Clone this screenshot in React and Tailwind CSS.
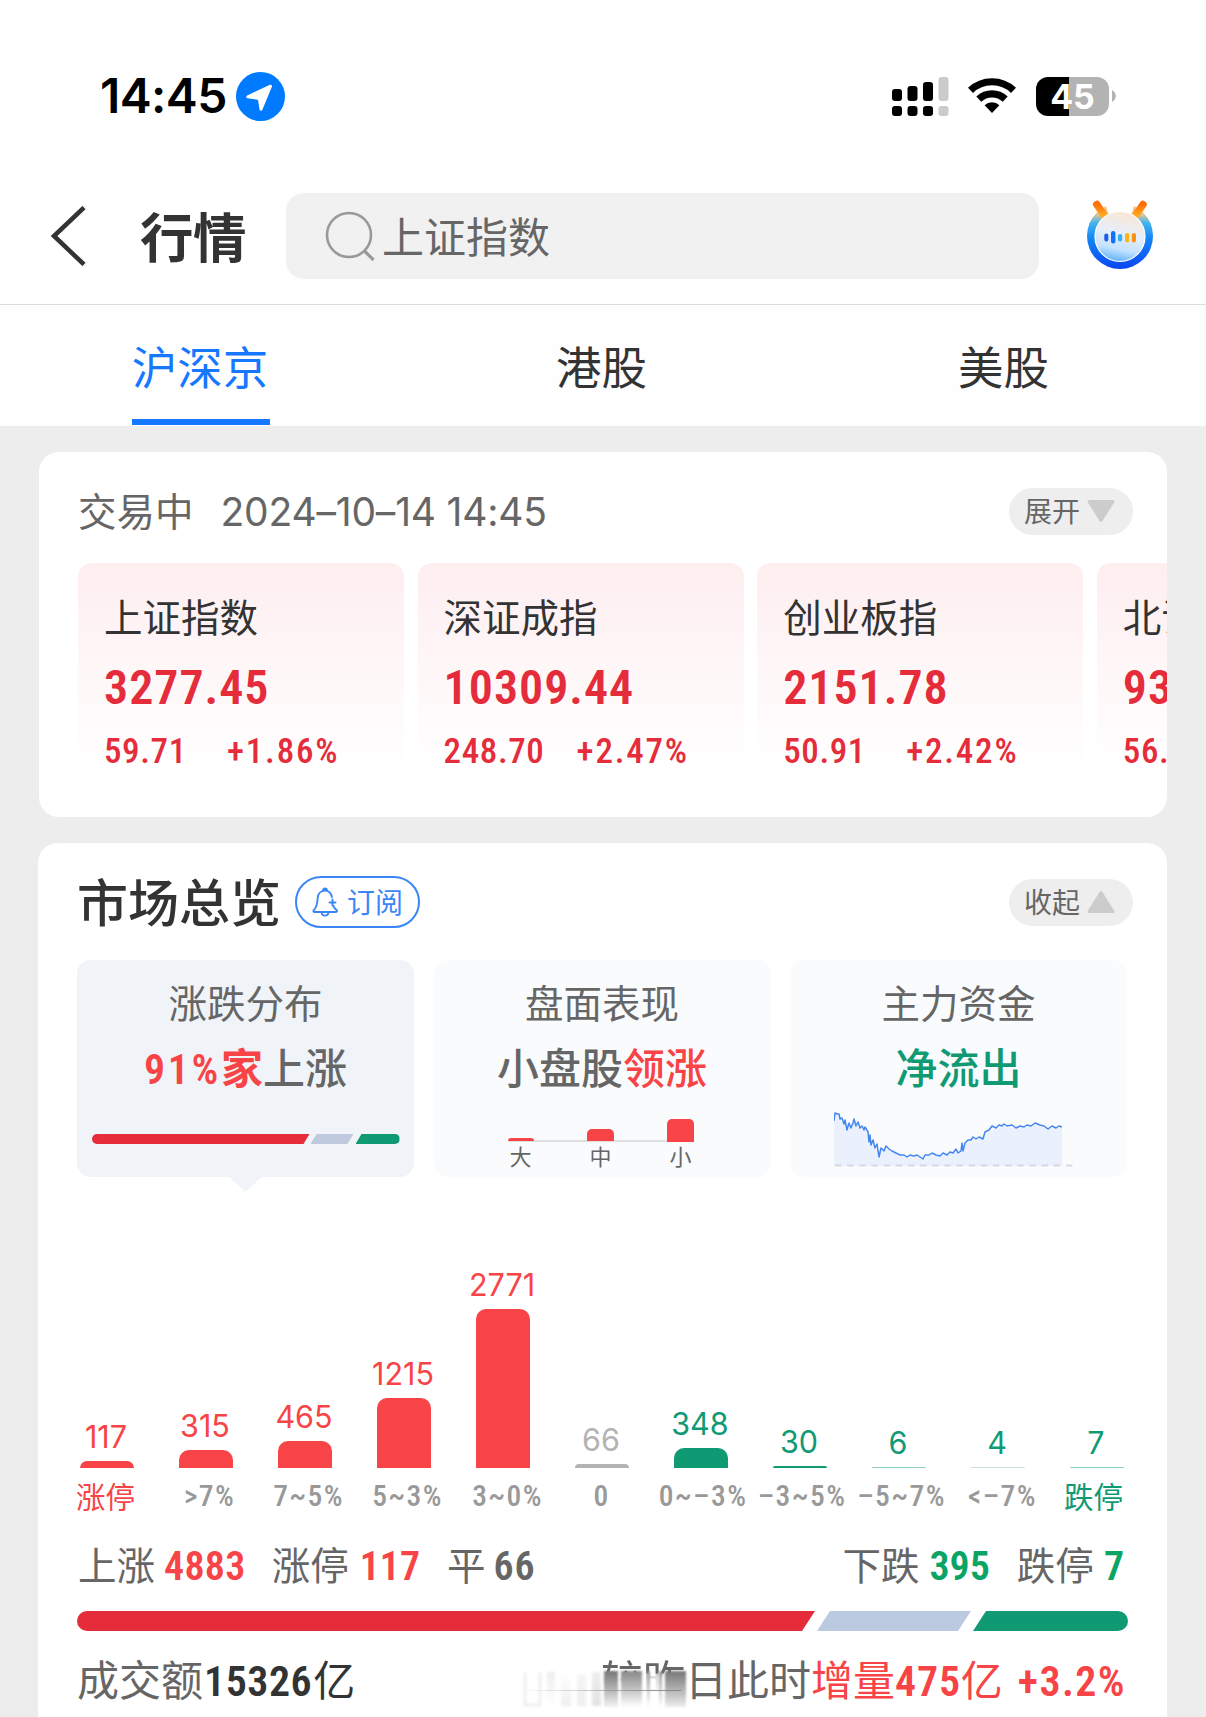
import React from "react";

const indexes = [
  { name: "上证指数", value: "3277.45", diff: "59.71", rate: "+1.86%", diffWidth: "w-[123px]" },
  { name: "深证成指", value: "10309.44", diff: "248.70", rate: "+2.47%", diffWidth: "w-[133px]" },
  { name: "创业板指", value: "2151.78", diff: "50.91", rate: "+2.42%", diffWidth: "w-[123px]" },
  { name: "北证50", value: "934.12", diff: "56.30", rate: "+6.41%", diffWidth: "w-[123px]" },
];

const rangeLabel = "text-[#999] font-medium tracking-[1.4px]";

const distribution = [
  { count: 117, height: 7, label: "涨停", bar: "bg-[#f84446]", text: "text-[#f84446]", labelClass: "text-[#f84446] pr-[2px] pt-[3px]" },
  { count: 315, height: 18, label: ">7%", bar: "bg-[#f84446]", text: "text-[#f84446]", labelClass: `${rangeLabel} pl-[8px]` },
  { count: 465, height: 27, label: "7~5%", bar: "bg-[#f84446]", text: "text-[#f84446]", labelClass: `${rangeLabel} pl-[8px]` },
  { count: 1215, height: 70, label: "5~3%", bar: "bg-[#f84446]", text: "text-[#f84446]", labelClass: `${rangeLabel} pl-[8px]` },
  { count: 2771, height: 159, label: "3~0%", bar: "bg-[#f84446]", text: "text-[#f84446]", labelClass: `${rangeLabel} pl-[10px]` },
  { count: 66, height: 4, label: "0", bar: "bg-[#b3b3b3]", text: "text-[#b3b3b3]", labelClass: rangeLabel },
  { count: 348, height: 20, label: "0~–3%", bar: "bg-[#109a74]", text: "text-[#109a74]", labelClass: `${rangeLabel} pl-[5px]` },
  { count: 30, height: 2, label: "–3~5%", bar: "bg-[#109a74]", text: "text-[#109a74]", labelClass: `${rangeLabel} pl-[5px]` },
  { count: 6, height: 1, label: "–5~7%", bar: "bg-[#8fd0bd]", text: "text-[#109a74]", labelClass: `${rangeLabel} pl-[6px]` },
  { count: 4, height: 1, label: "<–7%", bar: "bg-[#c0e4da]", text: "text-[#109a74]", labelClass: `${rangeLabel} pl-[10px]` },
  { count: 7, height: 1, label: "跌停", bar: "bg-[#8fd0bd]", text: "text-[#109a74]", labelClass: "text-[#109a74] pr-[6px] pt-[3px]" },
];

const StatusBar = () => (
  <div className="flex h-[192px] items-center justify-between pl-[100px] pr-[90px]">
    <div className="flex items-center">
      <span className="w-[136px] font-['Inter',sans-serif] text-[48px] font-semibold leading-none tracking-[-0.6px] text-black">
        14:45
      </span>
      <svg className="h-[49px] w-[49px]" viewBox="0 0 49 49">
        <circle cx="24.5" cy="24.5" r="24.5" fill="#007aff" />
        <path
          d="M34.5 14.2 L25 37.2 L23.3 26.4 L11.8 24.8 Z"
          fill="#fff"
          stroke="#fff"
          strokeWidth="3"
          strokeLinejoin="round"
        />
      </svg>
    </div>
    <div className="flex items-center">
      <svg className="h-[39px] w-[57px]" viewBox="0 0 57 39">
        <rect x="0" y="12" width="10" height="12" rx="3" />
        <rect x="15.5" y="9" width="10" height="15" rx="3" />
        <rect x="31" y="5" width="10" height="19" rx="3" />
        <rect x="46.5" y="0" width="10" height="24" rx="3" fill="#cbcbcb" />
        <rect x="0" y="29" width="10" height="10" rx="3" />
        <rect x="15.5" y="29" width="10" height="10" rx="3" />
        <rect x="31" y="29" width="10" height="10" rx="3" />
        <rect x="46.5" y="29" width="10" height="10" rx="3" fill="#cbcbcb" />
      </svg>
      <svg className="ml-[18px] h-[36px] w-[50px]" viewBox="0 0 50 36">
        <path d="M3.5 12.3 A31.3 31.3 0 0 1 46.5 12.3" fill="none" stroke="#000" strokeWidth="7.2" />
        <path d="M11.8 21.1 A19.2 19.2 0 0 1 38.2 21.1" fill="none" stroke="#000" strokeWidth="7.2" />
        <path d="M25 35 L17.6 27.2 A10.8 10.8 0 0 1 32.4 27.2 Z" />
      </svg>
      <div className="ml-[19px] flex h-[39px] w-[73px] items-center justify-center rounded-[12px] bg-[linear-gradient(90deg,#000_45%,#b3b3b3_45%)] pt-px font-['Inter',sans-serif] text-[34px] font-bold leading-none text-white">
        45
      </div>
      <svg className="ml-[3px] h-[12px] w-[4px]" viewBox="0 0 4 12">
        <path d="M0 0 C5 2.5 5 9.5 0 12 Z" fill="#b3b3b3" />
      </svg>
    </div>
  </div>
);

const AssistantIcon = () => (
  <svg className="h-[72px] w-[68px]" viewBox="0 0 68 72">
    <defs>
      <linearGradient id="ring" x1="0" y1="0" x2="0" y2="1">
        <stop offset="0" stopColor="#ffb866" />
        <stop offset="0.16" stopColor="#efc88f" />
        <stop offset="0.3" stopColor="#44b4ee" />
        <stop offset="0.55" stopColor="#1183f7" />
        <stop offset="1" stopColor="#0a46f0" />
      </linearGradient>
      <linearGradient id="face" x1="0.6" y1="0" x2="0.4" y2="1">
        <stop offset="0" stopColor="#fbe7d6" />
        <stop offset="0.45" stopColor="#e6eefa" />
        <stop offset="0.75" stopColor="#c4e2fe" />
        <stop offset="1" stopColor="#5cb2fb" />
      </linearGradient>
      <linearGradient id="antenna" x1="0" y1="0" x2="0" y2="1">
        <stop offset="0" stopColor="#ff6f0c" />
        <stop offset="1" stopColor="#ffa81f" />
      </linearGradient>
    </defs>
    <circle cx="34" cy="36" r="33" fill="url(#ring)" />
    <path d="M18 -1 H50 L46 13 H22 Z" fill="#fff" />
    <path d="M10.8 4.5 L18 15" stroke="url(#antenna)" strokeWidth="7.5" strokeLinecap="round" />
    <path d="M57 4.5 L49.8 15" stroke="url(#antenna)" strokeWidth="7.5" strokeLinecap="round" />
    <circle cx="34" cy="36.5" r="25" fill="url(#face)" stroke="#fff" strokeWidth="1.2" />
    <rect x="18.3" y="33.5" width="4" height="8" rx="2" fill="#1f5be8" />
    <rect x="25" y="31" width="4.4" height="12.5" rx="2.2" fill="#1172f2" />
    <rect x="32" y="34" width="4.2" height="7.5" rx="2.1" fill="#31b1f0" />
    <rect x="39" y="33" width="4.2" height="9.5" rx="2.1" fill="#fbb615" />
    <rect x="45.8" y="33" width="4.2" height="9.5" rx="2.1" fill="#fb920f" />
  </svg>
);

const Header = () => (
  <div className="flex h-[113px] items-start border-b border-[#dcdcdc] pt-px">
    <div className="flex h-[86px] w-full items-center">
      <svg className="ml-[50px] h-[60px] w-[36px]" viewBox="0 0 36 60" fill="none">
        <path d="M34 1.5 L4 30 L34 58.5" stroke="#333" strokeWidth="4.5" />
      </svg>
      <h1 className="ml-[54px] w-[146px] pt-[7px] text-[53.5px] font-bold leading-[76px] tracking-[-0.5px] text-[#333]">行情</h1>
      <div className="flex h-[86px] w-[753px] items-center rounded-[18px] bg-[#f1f1f1] pl-[39px]">
        <svg className="h-[50px] w-[50px]" viewBox="0 0 50 50" fill="none" stroke="#999" strokeWidth="2.6">
          <circle cx="24" cy="24" r="22" />
          <path d="M39.5 40 L48.5 49" strokeWidth="3.2" />
        </svg>
        <span className="ml-[7px] pt-[6px] text-[42px] leading-[60px] text-[#666]">上证指数</span>
      </div>
      <div className="ml-[47px]">
        <AssistantIcon />
      </div>
    </div>
  </div>
);

const Tabs = () => (
  <div className="grid h-[121px] grid-cols-3 bg-[#fefefe] text-[45.5px] leading-[66px] text-[#333]">
    <div className="flex flex-col items-center pt-[32px] text-[#1677ff]">
      <span className="-ml-[2px]">沪深京</span>
      <div className="mt-[16px] h-[6px] w-[138px] bg-[#1677ff]" />
    </div>
    <div className="flex justify-center pr-[3px] pt-[32px]">港股</div>
    <div className="flex justify-center pr-[3px] pt-[32px]">美股</div>
  </div>
);

const TogglePill = ({ text, open }) => (
  <button className="flex h-[47px] w-[124px] items-center rounded-full bg-[#eee] pl-[15px] text-[28px] leading-none text-[#666]">
    <span className="pt-[4px]">{text}</span>
    <svg className={open ? "ml-[6px] h-[24px] w-[30px] rotate-180" : "ml-[6px] h-[24px] w-[30px]"} viewBox="0 0 30 24">
      <path d="M3 2.5 H27 L15 21.5 Z" fill="#ccc" stroke="#ccc" strokeWidth="3" strokeLinejoin="round" />
    </svg>
  </button>
);

const IndexCard = ({ item }) => (
  <div className="h-[232px] w-[326px] shrink-0 rounded-[14px] bg-linear-to-b from-[#feeef0] to-white to-90% pl-[26px] pt-[28px]">
    <div className="whitespace-nowrap text-[38.5px] leading-[56px] text-[#333]">{item.name}</div>
    <div className="mt-[11px] text-[48px] font-semibold leading-[60px] tracking-[1px] text-[#e52c3b]">{item.value}</div>
    <div className="mt-[13px] flex whitespace-nowrap text-[35px] font-medium leading-[42px] text-[#e52c3b]">
      <span className={`tracking-[0.6px] ${item.diffWidth}`}>{item.diff}</span>
      <span className="tracking-[1.8px]">{item.rate}</span>
    </div>
  </div>
);

const BellIcon = () => (
  <svg className="h-[30px] w-[27px]" viewBox="0 0 27 30" fill="none" stroke="#3b86f7" strokeWidth="1.9" strokeLinecap="round" strokeLinejoin="round">
    <path d="M20 10 C19 6 16.5 3.6 13 3.6 C8.5 3.6 5.8 7.2 5.6 11.5 C5.4 17 5 20 1.8 23 C1 24 1.3 25 2.5 25 H23.5 C25.2 25 25.4 23.8 24.5 23 C23 21.8 22 20.6 21.5 19" />
    <path d="M11 3.5 C11 0.7 15 0.7 15 3.5" fill="#3b86f7" />
    <path d="M9.5 25.5 C10 29.6 16 29.6 16.5 25.5" />
    <path d="M20.5 12.5 V18.5 M17.5 15.5 H23.5" />
  </svg>
);

const RatioBar = ({ children, className }) => <div className={`flex overflow-hidden rounded-full ${className}`}>{children}</div>;

const OverviewCards = () => (
  <div className="mt-[32px] flex gap-[19.5px]">
    <div className="relative flex h-[217px] w-[337px] flex-col items-center rounded-[14px] bg-[#f0f4f9] pt-[17px]">
      <div className="text-[38.5px] leading-[56px] text-[#666]">涨跌分布</div>
      <div className="mt-[7px] text-[42px] font-medium leading-[60px] text-[#666]">
        <span className="font-semibold text-[#f84446]">
          <span className="tracking-[2.6px]">91%</span>家
        </span>
        上涨
      </div>
      <RatioBar className="mt-[34px] h-[10px] w-[308px]">
        <div className="w-[218px] bg-[#e52c3b] [clip-path:polygon(0_0,100%_0,calc(100%-6px)_100%,0_100%)]" />
        <div className="ml-[1px] w-[43px] bg-[#bfcade] [clip-path:polygon(6px_0,100%_0,calc(100%-6px)_100%,0_100%)]" />
        <div className="ml-[2px] flex-1 bg-[#109a74] [clip-path:polygon(6px_0,100%_0,100%_100%,0_100%)]" />
      </RatioBar>
      <div className="absolute left-[151px] top-[216px] h-[16px] w-[35px] bg-[#f0f4f9] [clip-path:polygon(0_0,100%_0,50%_100%)]" />
    </div>

    <div className="flex h-[217px] w-[337px] flex-col items-center rounded-[14px] bg-[#fafbfd] pt-[17px]">
      <div className="text-[38.5px] leading-[56px] text-[#666]">盘面表现</div>
      <div className="mt-[7px] text-[42px] font-medium leading-[60px] text-[#666]">
        小盘股<span className="text-[#f84446]">领涨</span>
      </div>
      <div className="mr-[2px] mt-[19px] flex h-[23px] w-[186px] items-end justify-between border-b-2 border-[#e0e0e0]">
        <div className="-mb-px h-[3px] w-[26px] rounded-t-[3px] bg-[#f84446]" />
        <div className="-mb-px h-[12px] w-[27px] rounded-t-[5px] bg-[#f84446]" />
        <div className="-mb-[2px] h-[23px] w-[27px] rounded-t-[5px] bg-[#f84446]" />
      </div>
      <div className="mr-[3px] mt-px flex w-[182px] justify-between text-[22px] leading-[30px] text-[#666]">
        <span>大</span>
        <span>中</span>
        <span>小</span>
      </div>
    </div>

    <div className="flex h-[217px] w-[337px] flex-col rounded-[14px] bg-[#fafbfd] pt-[17px]">
      <div className="text-center text-[38.5px] leading-[56px] text-[#666]">主力资金</div>
      <div className="mt-[7px] text-center text-[42px] font-medium leading-[60px] text-[#109a74]">净流出</div>
      <svg className="ml-[44px] mt-[11px] h-[60px] w-[244px]" viewBox="0 0 244 60">
        <path
          d="M0 10 L2 2 L5 5 L8 11 L13 16 L20 12 L26 17 L32 20 L35 28 L40 34 L46 40 L54 38 L62 42 L71 44 L80 44 L87 46 L98 43 L108 44 L118 41 L127 37 L131 32 L140 29 L150 27 L156 20 L168 16 L183 17 L202 14 L214 17 L228 17 V55 H0 Z"
          fill="#ebf1fc"
        />
        <path
          d="M0 10 L1 2 L3 3 L5 3 L6 8 L8 7 L10 13 L11 9 L13 19 L15 12 L17 17 L19 12 L20 8 L22 15 L24 11 L26 17 L28 15 L30 19 L31 16 L34 21 L35 31 L36 24 L37 34 L39 29 L41 37 L43 33 L45 46 L47 37 L50 40 L52 35 L55 38 L58 40 L62 42 L66 44 L70 44 L73 46 L76 44 L80 45 L83 44 L86 46 L89 48 L91 44 L95 44 L98 42 L102 44 L106 45 L109 42 L113 44 L116 41 L119 42 L122 38 L124 42 L127 40 L128 32 L129 40 L131 32 L134 29 L137 29 L139 26 L142 28 L145 26 L149 28 L151 21 L155 19 L158 15 L162 17 L165 14 L168 15 L170 13 L173 15 L178 14 L182 17 L186 15 L190 16 L193 14 L197 15 L201 12 L206 14 L210 15 L214 18 L218 15 L222 17 L225 15 L228 16"
          fill="none"
          stroke="#4586f0"
          strokeWidth="1.5"
          strokeLinejoin="round"
        />
        <path d="M1 54.5 H244" stroke="#d4d9e2" strokeWidth="2" strokeDasharray="6.5 5.65" />
      </svg>
    </div>
  </div>
);

const DistributionChart = () => (
  <div className="mt-[91px] pl-[2px]">
    <div className="flex h-[200px] items-end">
      {distribution.map((item) => (
        <div key={item.label} className="-ml-[21.5px] mr-[21.5px] flex w-[99px] shrink-0 flex-col items-center">
          <span className={`mr-[2px] font-['Inter',sans-serif] text-[30.5px] leading-[40px] ${item.text}`}>{item.count}</span>
          <div className={`mt-[4px] w-[54px] rounded-t-[10px] ${item.bar}`} style={{ height: item.height }} />
        </div>
      ))}
    </div>
    <div className="-ml-[22px] mt-[8px] flex h-[42px] items-center">
      {distribution.map((item) => (
        <div
          key={item.label}
          className={`flex w-[99px] shrink-0 justify-center whitespace-nowrap text-[29.5px] leading-none ${item.labelClass}`}
        >
          {item.label}
        </div>
      ))}
    </div>
  </div>
);

const FadedLabel = () => (
  <div className="flex items-center">
    <div className="flex h-[62px] items-end gap-[6px] pb-[7px] blur-[1.5px]">
      <div className="h-[34px] w-[17px] border-x-2 border-b-2 border-[#e8e8e8] bg-white" />
      <div className="h-[34px] w-[8px] bg-linear-to-b from-[#eee] to-white" />
      <div className="h-[32px] w-[10px] bg-linear-to-b from-white to-[#eee]" />
      <div className="h-[32px] w-[9px] bg-linear-to-b from-[#f6f6f6] to-[#eee]" />
      <div className="h-[34px] w-[9px] bg-linear-to-b from-[#eee] to-[#e2e2e2]" />
    </div>
    <div className="relative">
      <span className="[mask-image:linear-gradient(180deg,#000_32%,rgba(0,0,0,0.25)_36%,transparent_75%)]">较昨</span>
      <div className="absolute left-[3px] top-[20px] flex h-[36px] gap-[3px] blur-[1px]">
        <div className="w-[14px] bg-linear-to-b from-[#777] to-[#f4f4f4]" />
        <div className="w-[21px] bg-linear-to-b from-[#888] to-white" />
        <div className="ml-[2px] w-[3px] bg-linear-to-b from-[#999] to-white" />
        <div className="ml-[6px] w-[3px] bg-linear-to-b from-[#999] to-white" />
        <div className="w-[21px] bg-linear-to-b from-[#777] to-[#eee]" />
      </div>
      <div className="absolute right-[4px] top-[39px] h-px w-[160px] bg-linear-to-r from-transparent to-[#888]" />
    </div>
  </div>
);

const Summary = () => (
  <>
    <div className="mt-[20px] flex h-[58px] items-center justify-between pr-[4px] pl-px text-[38.5px] leading-[58px] text-[#666]">
      <div className="flex">
        上涨<b className="ml-[9px] text-[40px] font-semibold tracking-[0.3px] text-[#f84446]">4883</b>
        <span className="ml-[26px]">涨停</span>
        <b className="ml-[11px] text-[40px] font-semibold text-[#f84446]">117</b>
        <span className="ml-[27px]">平</span>
        <b className="ml-[8px] text-[40px] font-semibold tracking-[0.8px]">66</b>
      </div>
      <div className="flex">
        下跌<b className="ml-[10px] text-[40px] font-semibold text-[#0aa465]">395</b>
        <span className="ml-[27px]">跌停</span>
        <b className="ml-[10px] text-[40px] font-semibold text-[#0aa465]">7</b>
      </div>
    </div>
    <RatioBar className="mt-[15px] h-[20px] w-[1051px]">
      <div className="w-[738px] bg-[#e52c3b] [clip-path:polygon(0_0,100%_0,calc(100%-13px)_100%,0_100%)]" />
      <div className="ml-[2px] w-[154px] bg-[#bccae1] [clip-path:polygon(13px_0,100%_0,calc(100%-13px)_100%,0_100%)]" />
      <div className="ml-[2px] flex-1 bg-[#109a74] [clip-path:polygon(13px_0,100%_0,100%_100%,0_100%)]" />
    </RatioBar>
    <div className="mt-[20px] flex h-[62px] items-center justify-between pr-[2px] text-[42px] leading-[62px] text-[#666]">
      <div className="flex text-[#333]">
        <span className="text-[#666]">成交额</span>
        <b className="ml-px font-semibold tracking-[0.5px]">15326</b>
        <span className="ml-px">亿</span>
      </div>
      <div className="flex items-center">
        <FadedLabel />
        日此时
        <span className="text-[#f84446]">增量</span>
        <b className="font-semibold tracking-[0.8px] text-[#f84446]">475</b>
        <span className="text-[#f84446]">亿</span>
        <b className="ml-[15px] font-semibold tracking-[1.4px] text-[#f84446]">+3.2%</b>
      </div>
    </div>
  </>
);

const App = () => {
  return (
    <div className="h-[1717px] w-[1206px] overflow-hidden bg-white font-['Roboto_Condensed','Noto_Sans_CJK_SC',sans-serif]">
      <StatusBar />
      <Header />
      <Tabs />
      <div className="h-[1291px] bg-[#ededed] pt-[26px]">
        {/* Index quotes */}
        <section className="ml-[39px] h-[365px] w-[1128px] overflow-hidden rounded-[20px] bg-white pl-[39px] pt-[30px]">
          <div className="flex h-[58px] items-center justify-between pr-[34px] text-[38.5px] leading-[58px] text-[#666]">
            <div className="flex items-center">
              <span className="pt-[4px]">交易中</span>
              <span className="ml-[27px] pt-px font-['Inter',sans-serif] text-[39px] tracking-[-0.2px]">2024–10–14 14:45</span>
            </div>
            <TogglePill text="展开" />
          </div>
          <div className="mt-[23px] flex gap-[13.6px]">
            {indexes.map((item) => (
              <IndexCard key={item.name} item={item} />
            ))}
          </div>
        </section>

        {/* Market overview */}
        <section className="ml-[38px] mt-[26px] h-[900px] w-[1129px] rounded-[20px] bg-white px-[39px] pt-[33px]">
          <div className="flex h-[52px] items-center justify-between">
            <div className="flex items-center">
              <h2 className="pt-[6px] text-[51px] font-medium leading-[70px] text-[#333]">市场总览</h2>
              <button className="ml-[14px] flex h-[52px] w-[125px] items-center justify-center rounded-full border-2 border-[#3b86f7] text-[28px] leading-none text-[#3b86f7]">
                <BellIcon />
                <span className="ml-[8px] pt-[3px]">订阅</span>
              </button>
            </div>
            <div className="-mr-[5px]">
              <TogglePill text="收起" open />
            </div>
          </div>
          <OverviewCards />
          <DistributionChart />
          <Summary />
        </section>
      </div>
    </div>
  );
};

export default App;
